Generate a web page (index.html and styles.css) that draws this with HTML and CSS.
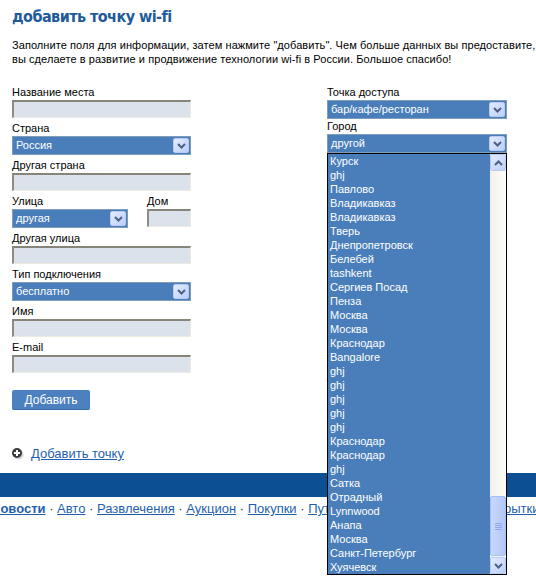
FILE: index.html
```html
<!DOCTYPE html>
<html lang="ru">
<head>
  <meta charset="UTF-8" />
  <title>добавить точку wi-fi</title>
  <link rel="stylesheet" href="styles.css">
</head>
<body>
  <div class="page">
    <h1 class="title">добавить точку wi-fi</h1>
    <p class="intro">Заполните поля для информации, затем нажмите "добавить". Чем больше данных вы предоставите, вы сделаете в развитие и продвижение технологии wi-fi в России. Большое спасибо!</p>

    <form class="add-form">
      <div class="cols">
        <!-- left column -->
        <div class="col">
          <label class="lbl">Название места</label>
          <input type="text" class="inp">

          <label class="lbl">Страна</label>
          <div class="sel"><span class="sel-text">Россия</span><span class="sel-btn"><svg width="9" height="6" viewBox="0 0 9 6"><polyline points="1,1 4.5,4.5 8,1" /></svg></span></div>

          <label class="lbl">Другая страна</label>
          <input type="text" class="inp">

          <div class="pair">
            <div>
              <label class="lbl">Улица</label>
              <div class="sel"><span class="sel-text">другая</span><span class="sel-btn"><svg width="9" height="6" viewBox="0 0 9 6"><polyline points="1,1 4.5,4.5 8,1" /></svg></span></div>
            </div>
            <div>
              <label class="lbl">Дом</label>
              <input type="text" class="inp">
            </div>
          </div>

          <label class="lbl">Другая улица</label>
          <input type="text" class="inp">

          <label class="lbl">Тип подключения</label>
          <div class="sel"><span class="sel-text">бесплатно</span><span class="sel-btn"><svg width="9" height="6" viewBox="0 0 9 6"><polyline points="1,1 4.5,4.5 8,1" /></svg></span></div>

          <label class="lbl">Имя</label>
          <input type="text" class="inp">

          <label class="lbl">E-mail</label>
          <input type="text" class="inp">
        </div>

        <!-- right column -->
        <div class="col col-right">
          <label class="lbl">Точка доступа</label>
          <div class="sel"><span class="sel-text">бар/кафе/ресторан</span><span class="sel-btn"><svg width="9" height="6" viewBox="0 0 9 6"><polyline points="1,1 4.5,4.5 8,1" /></svg></span></div>

          <label class="lbl">Город</label>
          <div class="city">
            <div class="sel"><span class="sel-text">другой</span><span class="sel-btn"><svg width="9" height="6" viewBox="0 0 9 6"><polyline points="1,1 4.5,4.5 8,1" /></svg></span></div>

            <!-- open list of cities -->
            <div class="dropdown">
              <ul class="options">
                <li>Курск</li>
                <li>ghj</li>
                <li>Павлово</li>
                <li>Владикавказ</li>
                <li>Владикавказ</li>
                <li>Тверь</li>
                <li>Днепропетровск</li>
                <li>Белебей</li>
                <li>tashkent</li>
                <li>Сергиев Посад</li>
                <li>Пенза</li>
                <li>Москва</li>
                <li>Москва</li>
                <li>Краснодар</li>
                <li>Bangalore</li>
                <li>ghj</li>
                <li>ghj</li>
                <li>ghj</li>
                <li>ghj</li>
                <li>ghj</li>
                <li>Краснодар</li>
                <li>Краснодар</li>
                <li>ghj</li>
                <li>Сатка</li>
                <li>Отрадный</li>
                <li>Lynnwood</li>
                <li>Анапа</li>
                <li>Москва</li>
                <li>Санкт-Петербург</li>
                <li>Хуячевск</li>
              </ul>
              <div class="scrollbar">
                <span class="sb-btn"><svg width="9" height="6" viewBox="0 0 9 6"><polyline points="1,5 4.5,1.5 8,5" /></svg></span>
                <span class="sb-track"><span class="sb-thumb"><i></i><i></i><i></i><i></i></span></span>
                <span class="sb-btn"><svg width="9" height="6" viewBox="0 0 9 6"><polyline points="1,1 4.5,4.5 8,1" /></svg></span>
              </div>
            </div>
          </div>
        </div>
      </div>

      <button type="submit" class="submit">Добавить</button>
    </form>

    <div class="add-more">
      <svg class="plus" width="12" height="12" viewBox="0 0 12 12">
        <circle cx="6.4" cy="6.4" r="5.2" fill="#d8d8d8" />
        <circle cx="5" cy="5" r="5" fill="#3d3d3d" />
        <rect x="4" y="2" width="2" height="6" fill="#fff" />
        <rect x="2" y="4" width="6" height="2" fill="#fff" />
      </svg>
      <a href="#">Добавить точку</a>
    </div>
  </div>

  <div class="bar"></div>

  <nav class="portal-nav">
    <a href="#" class="cur">Новости</a> · <a href="#">Авто</a> · <a href="#">Развлечения</a> · <a href="#">Аукцион</a> · <a href="#">Покупки</a> · <a href="#">Путешествия</a> · <a href="#">Знакомства</a> · <a href="#">Открытки</a>
  </nav>
</body>
</html>
```

FILE: styles.css
```css
* { box-sizing: border-box; margin: 0; padding: 0; }

html { overflow: hidden; }
body {
  min-height: 583px;
  font-family: "Liberation Sans", Arial, sans-serif;
  font-size: 11px;
  color: #000;
  background: #fff;
}

.page { width: 560px; padding: 0 12px; }

.title {
  font-family: "DejaVu Sans", sans-serif;
  font-stretch: condensed;
  font-weight: bold;
  font-size: 16px;
  letter-spacing: -0.55px;
  line-height: 20px;
  color: #1f5b9b;
  padding-top: 7px;
}

.intro { margin-top: 11px; line-height: 14px; width: 530px; letter-spacing: 0.07px; }

/* form */
.add-form { margin-top: 20px; }
.cols {
  display: grid;
  grid-template-columns: 179px 180px;
  column-gap: 136px;
}
.col { display: flex; flex-direction: column; }

.lbl { display: block; line-height: 13px; margin-top: 4px; margin-bottom: 1px; }
.col > .lbl:first-child { margin-top: 0; }
.col-right .lbl { margin-top: 1px; }

.inp {
  display: block;
  width: 100%;
  height: 18px;
  background: #dbe2ec;
  border-style: solid;
  border-width: 2px 1px 1px 2px;
  border-color: #86857a #ecebe2 #ecebe2 #8d8c80;
  outline: none;
}

.sel {
  display: flex;
  align-items: stretch;
  height: 19px;
  border: 1px solid #7f9db9;
  background: #4a7ebb;
  color: #fff;
  padding: 1px;
}
.sel-text { flex: 1; line-height: 15px; padding-left: 2px; white-space: nowrap; overflow: hidden; }
.sel-btn,
.sb-btn {
  width: 16px;
  display: flex;
  align-items: center;
  justify-content: center;
  background: linear-gradient(135deg, #e3ebfe, #bccff9);
  border: 1px solid #b7caf3;
  border-radius: 2px;
}
.sel-btn svg polyline,
.sb-btn svg polyline {
  fill: none;
  stroke: #4d6185;
  stroke-width: 2;
}

.pair {
  display: grid;
  grid-template-columns: 116px 44px;
  justify-content: space-between;
}
.pair .lbl { margin-top: 4px; }

/* open city list */
.city { position: relative; }
.dropdown {
  position: absolute;
  top: 100%;
  left: 0;
  z-index: 5;
  width: 180px;
  height: 422px;
  display: flex;
  border: 1px solid #000;
  background: #4a7ebb;
}
.options { flex: 1; list-style: none; color: #fff; }
.options li { height: 14px; line-height: 14px; padding-left: 2px; white-space: nowrap; }

.scrollbar {
  width: 16px;
  display: flex;
  flex-direction: column;
  background: linear-gradient(90deg, #f3f1ea, #fdfdfa);
}
.sb-btn { height: 17px; flex: none; }
.sb-track { flex: 1; display: flex; flex-direction: column; justify-content: flex-end; }
.sb-thumb {
  height: 60px;
  margin-bottom: 1px;
  display: flex;
  flex-direction: column;
  align-items: center;
  justify-content: center;
  gap: 1px;
  background: linear-gradient(90deg, #c9d8fd, #b3c8f7);
  border: 1px solid #a6bff1;
  border-radius: 2px;
}
.sb-thumb i { display: block; width: 7px; height: 1px; background: #8ea9ea; }

.submit {
  display: block;
  margin-top: 17px;
  width: 78px;
  height: 20px;
  border: none;
  border-bottom: 1px solid #3a6aa8;
  border-radius: 2px;
  background: #4d80bf;
  color: #fff;
  font-family: "Liberation Sans", Arial, sans-serif;
  font-size: 12px;
}

.add-more {
  margin-top: 36px;
  display: flex;
  align-items: center;
  gap: 7px;
  font-size: 13px;
  line-height: 16px;
}
.add-more a { color: #1f5fae; }

.bar { margin-top: 11px; height: 24px; background: #0c4f92; }

.portal-nav {
  margin-top: 4px;
  margin-left: -9px;
  font-size: 13px;
  line-height: 16px;
  white-space: nowrap;
  color: #333;
}
.portal-nav a { color: #1f5fae; }
.portal-nav a.cur { font-weight: bold; }
```
